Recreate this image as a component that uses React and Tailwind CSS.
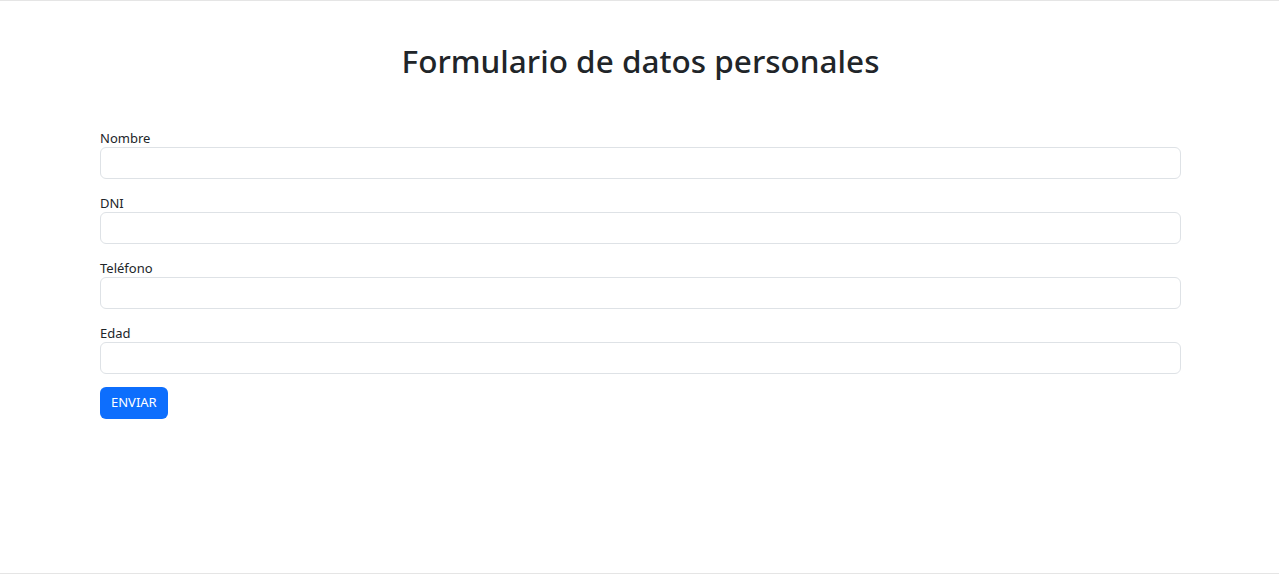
import React from 'react';

const fields = ['Nombre', 'DNI', 'Teléfono', 'Edad'];

const Field = ({ label }) => (
    <div className="mb-4">
        <label className="block text-[13px] leading-[16px] mb-px text-[#212529]">{label}</label>
        <input type="text" className="block w-full h-8 rounded-md border border-[#dee2e6] bg-white px-3 text-[13px] outline-none" />
    </div>
);

const App = () => {
    return (
        <div className="min-h-[574px] bg-white border-y border-[#e5e5e5] font-['Segoe_UI','Noto_Sans',sans-serif] text-[#212529]">
            <div className="pl-[100px] pr-[98px] pt-[41px]">
                <h1 className="text-center text-[31.5px] leading-[38px] font-medium mb-[50px]">Formulario de datos personales</h1>
                <form onSubmit={e => e.preventDefault()}>
                    {fields.map(f => <Field key={f} label={f} />)}
                    <button type="submit" className="block -mt-[3px] h-8 px-[11px] rounded-md bg-[#0d6efd] text-white text-[13px]">
                        ENVIAR
                    </button>
                </form>
            </div>
        </div>
    );
};

export default App;
